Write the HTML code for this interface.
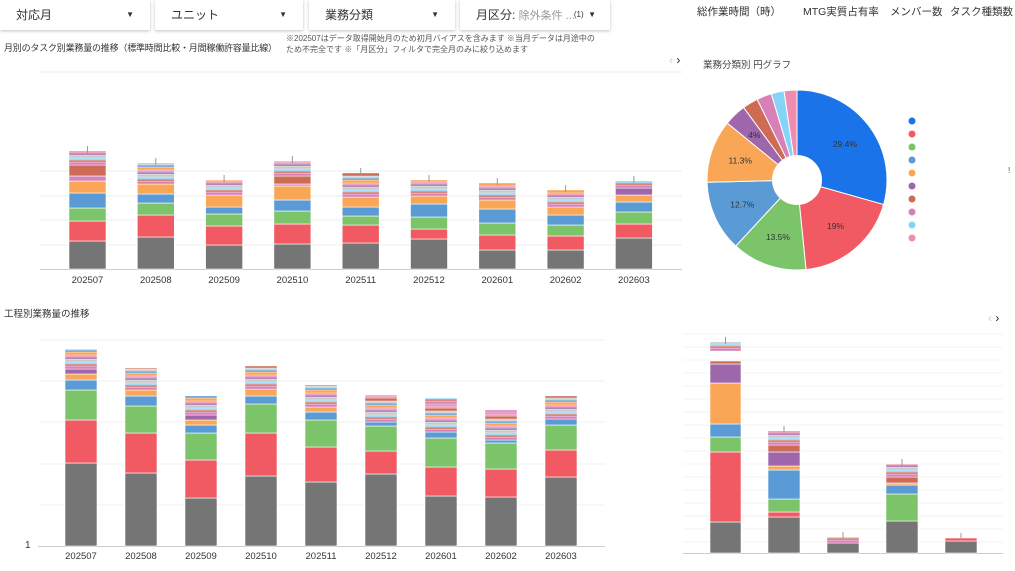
<!DOCTYPE html>
<html><head><meta charset="utf-8">
<style>
html,body{margin:0;padding:0;background:#fff;width:1015px;height:571px;overflow:hidden;font-family:"Liberation Sans","Noto Sans CJK JP",sans-serif;color:#333}
.f{position:absolute;top:0;height:30px;background:#fff;box-shadow:0 1px 3px rgba(0,0,0,.25);font-size:12px;line-height:30px;color:#333}
.f span{position:absolute;left:16px}
.f i{position:absolute;right:16px;top:0;font-style:normal;font-size:8px}
.t{position:absolute;white-space:nowrap}
svg{position:absolute;left:0;top:0}
</style></head><body>
<div class="f" style="left:0;width:150px"><span>対応月</span><i>▼</i></div>
<div class="f" style="left:155px;width:148px"><span>ユニット</span><i>▼</i></div>
<div class="f" style="left:309px;width:146px"><span>業務分類</span><i>▼</i></div>
<div class="f" style="left:460px;width:150px"><span>月区分: <span style="position:static;color:#999;font-size:11px">除外条件 ...</span></span><i style="right:14px">(1) &nbsp;▼</i></div>
<div class="t" style="left:286px;top:33px;font-size:8px;color:#555;line-height:11px">※202507はデータ取得開始月のため初月バイアスを含みます ※当月データは月途中の<br>ため不完全です ※「月区分」フィルタで完全月のみに絞り込めます</div>
<div class="t" style="left:4px;top:41px;font-size:9px;color:#333;letter-spacing:-0.2px">月別のタスク別業務量の推移（標準時間比較・月間稼働許容量比線）</div>
<div class="t" style="left:697px;top:4px;font-size:10.5px;color:#333">総作業時間（時）</div>
<div class="t" style="left:803px;top:4px;font-size:10.5px;color:#333">MTG実質占有率</div>
<div class="t" style="left:890px;top:4px;font-size:10.5px;color:#333">メンバー数</div>
<div class="t" style="left:950px;top:4px;font-size:10.5px;color:#333">タスク種類数</div>
<div class="t" style="left:703px;top:57px;font-size:9.5px;color:#444">業務分類別 円グラフ</div>
<div class="t" style="left:4px;top:306px;font-size:9.5px;color:#333">工程別業務量の推移</div>
<div class="t" style="left:25px;top:540px;font-size:10px;color:#333">1</div>
<div class="t" style="left:669px;top:53px;font-size:12px;color:#222"><span style="color:#ccc">‹</span> ›</div>
<div class="t" style="left:988px;top:311px;font-size:12px;color:#222"><span style="color:#ccc">‹</span> ›</div>
<div class="t" style="left:1008px;top:166px;font-size:8px;color:#555">!</div>
<svg id="s" width="1015" height="571" xmlns="http://www.w3.org/2000/svg"></svg>
<script>
var C={g:'#757575',r:'#f25a63',gr:'#7cc46a',b:'#5a9bd5',o:'#f9a656',p:'#9e66ab',br:'#cd6b55',pk:'#d980b9',lb:'#86d4f5',p2:'#f08cb0',lg:'#c8c8c8'};
var S=['pk','br','lb','lg','p','p2','o','b','lg','br','p2','pk'];
var h='';
function line(x1,y1,x2,y2,c){h+='<line x1="'+x1+'" y1="'+y1+'" x2="'+x2+'" y2="'+y2+'" stroke="'+c+'" stroke-width="1"/>';}
function txt(x,y,s,sz,a){h+='<text x="'+x+'" y="'+y+'" font-size="'+sz+'" fill="#333" text-anchor="'+(a||'middle')+'" font-family="Liberation Sans, Noto Sans CJK JP, sans-serif">'+s+'</text>';}
function bar(x,w,base,segs,top,whisk){
 var y=base;
 segs.forEach(function(s){var hh=s[1];h+='<rect x="'+x+'" y="'+(y-hh)+'" width="'+w+'" height="'+hh+'" fill="'+C[s[0]]+'" stroke="#fff" stroke-width="0.6"/>';y-=hh;});
 var i=0;while(y>top){var hh=Math.min(y-top,i%3==0?3:2);h+='<rect x="'+x+'" y="'+(y-hh)+'" width="'+w+'" height="'+hh+'" fill="'+C[S[i%S.length]]+'" stroke="#fff" stroke-width="0.4"/>';y-=hh;i++;}
 if(whisk)line(x+w/2,top-5,x+w/2,top+2,'#999');
}
[72,171,196,220,245].forEach(function(y){line(40,y,682,y,'#eee');});
line(40,269.5,682,269.5,'#ccc');
var L=['202507','202508','202509','202510','202511','202512','202601','202602','202603'];
var T=[[[['g',28],['r',20],['gr',13],['b',15],['o',12],['pk',5],['br',11]],151],
[[['g',32],['r',22],['gr',12],['b',9],['o',10]],163],
[[['g',24],['r',19],['gr',12],['b',7],['o',12]],180],
[[['g',25],['r',20],['gr',13],['b',11],['o',14],['pk',2],['br',8]],161],
[[['g',26],['r',18],['gr',9],['b',9],['o',10]],173],
[[['g',30],['r',10],['gr',12],['b',13],['o',8]],180],
[[['g',19],['r',15],['gr',12],['b',14],['o',9]],183],
[[['g',19],['r',14],['gr',11],['b',10],['o',8]],190],
[[['g',31],['r',14],['gr',12],['b',10],['o',7],['p',7]],181]];
T.forEach(function(d,i){var x=69+i*68.3;bar(x,37,269,d[0],d[1],true);txt(x+18.5,283,L[i],9.5);});
[340,381,422,464,505].forEach(function(y){line(40,y,605,y,'#f0f0f0');});
line(38,546.5,605,546.5,'#ccc');
var B=[[[['g',83],['r',43],['gr',30],['b',10],['o',6],['p',5]],349],
[[['g',73],['r',40],['gr',27],['b',10],['o',6]],368],
[[['g',48],['r',38],['gr',27],['b',8],['o',5],['p',5]],396],
[[['g',70],['r',43],['gr',29],['b',8],['o',7]],366],
[[['g',64],['r',35],['gr',27],['b',8],['o',5]],385],
[[['g',72],['r',23],['gr',25],['b',4]],395],
[[['g',50],['r',29],['gr',29],['b',6]],398],
[[['g',49],['r',28],['gr',26],['b',3]],410],
[[['g',69],['r',27],['gr',25],['b',6]],396]];
B.forEach(function(d,i){var x=65+i*60;bar(x,32,546,d[0],d[1],false);txt(x+16,559,L[i],9.5);});
for(var y=334;y<553;y+=13)line(683,y,1003,y,'#f3f3f3');
line(683,553.5,1003,553.5,'#ccc');
bar(710,31,553,[['g',31],['r',70],['gr',15],['b',13],['o',41],['p',19],['br',3]],361,false);
bar(710,31,351,[],342,true);
bar(768,32,553,[['g',36],['r',5],['gr',13],['b',29],['o',4],['p',14],['br',7]],431,true);
bar(827,32,553,[['g',10]],537,true);
bar(886,32,553,[['g',32],['gr',27],['b',9],['o',2],['br',6]],464,true);
bar(945,32,553,[['g',12],['r',3]],538,true);
var P=[[29.4,'#1a73e8','29.4%'],[19,'#f25a63','19%'],[13.5,'#7cc46a','13.5%'],[12.7,'#5a9bd5','12.7%'],[11.3,'#f9a656','11.3%'],[4,'#9e66ab','4%'],[2.8,'#cd6b55',''],[2.7,'#d980b9',''],[2.3,'#86d4f5',''],[2.3,'#f08cb0','']];
var cx=797,cy=180,R=90,a=-Math.PI/2;
P.forEach(function(p){var a2=a+p[0]/100*2*Math.PI;var x1=cx+R*Math.cos(a),y1=cy+R*Math.sin(a),x2=cx+R*Math.cos(a2),y2=cy+R*Math.sin(a2);
h+='<path d="M'+cx+' '+cy+'L'+x1+' '+y1+'A'+R+' '+R+' 0 '+(a2-a>Math.PI?1:0)+' 1 '+x2+' '+y2+'Z" fill="'+p[1]+'" stroke="#fff" stroke-width="1"/>';
if(p[2]){var m=(a+a2)/2,r2=p[0]<5?62:60;txt(cx+r2*Math.cos(m),cy+r2*Math.sin(m)+3,p[2],8.5);}a=a2;});
h+='<circle cx="'+cx+'" cy="'+cy+'" r="25" fill="#fff"/>';
P.forEach(function(p,i){h+='<circle cx="912" cy="'+(121+i*13)+'" r="3.5" fill="'+p[1]+'"/>';});
document.getElementById('s').innerHTML=h;
</script>
</body></html>
